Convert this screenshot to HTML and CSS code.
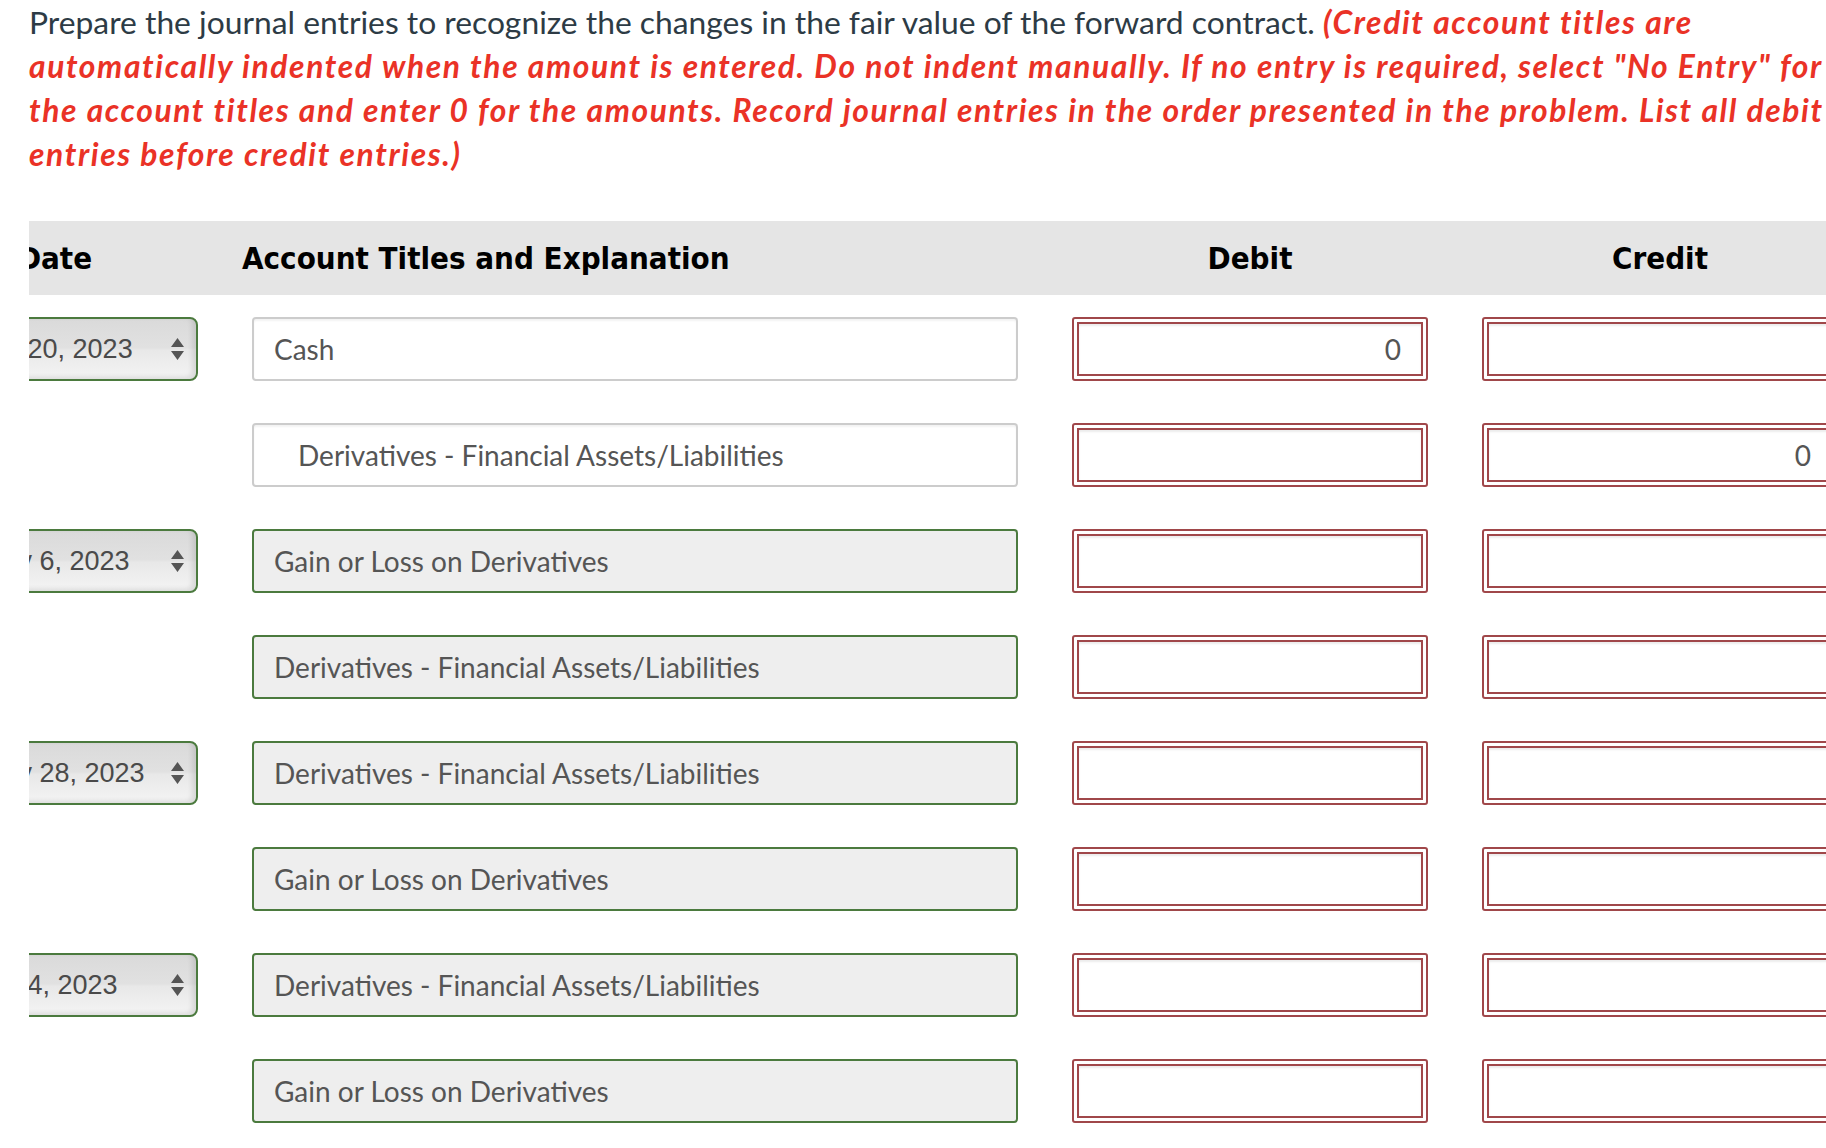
FILE: index.html
```html
<!DOCTYPE html>
<html lang="en">
<head>
<meta charset="utf-8">
<title>Journal entries</title>
<link rel="stylesheet" href="styles.css">
</head>
<body>
<p class="prompt">Prepare the journal entries to recognize the changes in the fair value of the forward contract. <em>(Credit account titles are automatically indented when the amount is entered. Do not indent manually. If no entry is required, select "No Entry" for the account titles and enter 0 for the amounts. Record journal entries in the order presented in the problem. List all debit entries before credit entries.)</em></p>

<div class="journal-wrap">
  <div class="journal">
    <div class="jhead cols">
      <div class="th th-center">Date</div>
      <div class="th">Account Titles and Explanation</div>
      <div class="th th-center">Debit</div>
      <div class="th th-center">Credit</div>
    </div>

    <div class="jbody">
      <div class="jrow cols">
        <div class="cell"><div class="date-select"><span class="date-text">January 20, 2023</span><svg class="spin" viewBox="0 0 13 26" width="13" height="26"><path d="M6.5 2 L13 11 L0 11 Z M0 15 L13 15 L6.5 24 Z" fill="#555"/></svg></div></div>
        <div class="cell"><div class="acct acct-plain">Cash</div></div>
        <div class="cell"><div class="amt"><div class="amt-in">0</div></div></div>
        <div class="cell"><div class="amt"><div class="amt-in"></div></div></div>
      </div>

      <div class="jrow cols">
        <div class="cell"></div>
        <div class="cell"><div class="acct acct-plain acct-indent">Derivatives - Financial Assets/Liabilities</div></div>
        <div class="cell"><div class="amt"><div class="amt-in"></div></div></div>
        <div class="cell"><div class="amt"><div class="amt-in">0</div></div></div>
      </div>

      <div class="jrow cols">
        <div class="cell"><div class="date-select"><span class="date-text">February 6, 2023</span><svg class="spin" viewBox="0 0 13 26" width="13" height="26"><path d="M6.5 2 L13 11 L0 11 Z M0 15 L13 15 L6.5 24 Z" fill="#555"/></svg></div></div>
        <div class="cell"><div class="acct acct-ok">Gain or Loss on Derivatives</div></div>
        <div class="cell"><div class="amt"><div class="amt-in"></div></div></div>
        <div class="cell"><div class="amt"><div class="amt-in"></div></div></div>
      </div>

      <div class="jrow cols">
        <div class="cell"></div>
        <div class="cell"><div class="acct acct-ok">Derivatives - Financial Assets/Liabilities</div></div>
        <div class="cell"><div class="amt"><div class="amt-in"></div></div></div>
        <div class="cell"><div class="amt"><div class="amt-in"></div></div></div>
      </div>

      <div class="jrow cols">
        <div class="cell"><div class="date-select"><span class="date-text">February 28, 2023</span><svg class="spin" viewBox="0 0 13 26" width="13" height="26"><path d="M6.5 2 L13 11 L0 11 Z M0 15 L13 15 L6.5 24 Z" fill="#555"/></svg></div></div>
        <div class="cell"><div class="acct acct-ok">Derivatives - Financial Assets/Liabilities</div></div>
        <div class="cell"><div class="amt"><div class="amt-in"></div></div></div>
        <div class="cell"><div class="amt"><div class="amt-in"></div></div></div>
      </div>

      <div class="jrow cols">
        <div class="cell"></div>
        <div class="cell"><div class="acct acct-ok">Gain or Loss on Derivatives</div></div>
        <div class="cell"><div class="amt"><div class="amt-in"></div></div></div>
        <div class="cell"><div class="amt"><div class="amt-in"></div></div></div>
      </div>

      <div class="jrow cols">
        <div class="cell"><div class="date-select"><span class="date-text">January 4, 2023</span><svg class="spin" viewBox="0 0 13 26" width="13" height="26"><path d="M6.5 2 L13 11 L0 11 Z M0 15 L13 15 L6.5 24 Z" fill="#555"/></svg></div></div>
        <div class="cell"><div class="acct acct-ok">Derivatives - Financial Assets/Liabilities</div></div>
        <div class="cell"><div class="amt"><div class="amt-in"></div></div></div>
        <div class="cell"><div class="amt"><div class="amt-in"></div></div></div>
      </div>

      <div class="jrow cols">
        <div class="cell"></div>
        <div class="cell"><div class="acct acct-ok">Gain or Loss on Derivatives</div></div>
        <div class="cell"><div class="amt"><div class="amt-in"></div></div></div>
        <div class="cell"><div class="amt"><div class="amt-in"></div></div></div>
      </div>
    </div>
  </div>
</div>
</body>
</html>
```

FILE: styles.css
```css
html, body {
  margin: 0;
  padding: 0;
  background: #ffffff;
  overflow: hidden;
}

body {
  font-family: Lato, "Open Sans", sans-serif;
  width: 1826px;
  height: 1148px;
}

.prompt {
  margin: 0 0 0 29px;
  width: 1830px;
  font-size: 31.8px;
  line-height: 44px;
  color: #2d3b45;
}

.prompt em {
  color: #ea3226;
  font-weight: bold;
  font-style: italic;
  letter-spacing: 1.6px;
}

.journal-wrap {
  margin: 45px 0 0 29px;
  width: 1797px;
  overflow: hidden;
}

.journal {
  margin-left: -127px;
  width: 1946px;
}

.cols {
  display: grid;
  grid-template-columns: 306px 786px 376px 376px;
  column-gap: 34px;
}

.jhead {
  height: 74px;
  background: #e5e5e5;
  align-items: center;
}

.th {
  font-family: "DejaVu Sans Condensed", "DejaVu Sans", Verdana, sans-serif;
  font-weight: bold;
  font-size: 31px;
  color: #000;
  white-space: nowrap;
}

.th-center {
  text-align: center;
}

.jbody {
  padding-top: 22px;
  display: flex;
  flex-direction: column;
  row-gap: 42px;
}

.jrow {
  height: 64px;
}

.cell {
  padding: 0 10px;
}

.date-select {
  box-sizing: border-box;
  height: 64px;
  border: 2px solid #4b7a3e;
  border-radius: 8px;
  background: linear-gradient(to bottom, #dadada 0%, #e1e1e1 48%, #e8e8e8 52%, #f4f4f4 100%);
  box-shadow: inset -4px -2px 5px rgba(0, 0, 0, 0.10);
  display: flex;
  align-items: center;
  justify-content: space-between;
  padding: 0 12px 0 10px;
  overflow: hidden;
}

.date-text {
  font-family: "Liberation Sans", Arial, sans-serif;
  font-size: 27px;
  color: #4a4a4a;
  white-space: nowrap;
}

.spin {
  flex: none;
  display: block;
}

.acct {
  box-sizing: border-box;
  height: 64px;
  border-radius: 4px;
  display: flex;
  align-items: center;
  padding-left: 20px;
  font-size: 28px;
  color: #555555;
  white-space: nowrap;
}

.acct-plain {
  border: 2px solid #cccccc;
  background: #ffffff;
  box-shadow: inset 0 2px 2px rgba(0, 0, 0, 0.05);
}

.acct-indent {
  padding-left: 44px;
}

.acct-ok {
  border: 2px solid #4b7a3e;
  background: #eeeeee;
}

.amt {
  box-sizing: border-box;
  height: 64px;
  border: 2px solid #a0474a;
  border-radius: 3px;
  padding: 3px;
  background: #ffffff;
}

.amt-in {
  box-sizing: border-box;
  height: 100%;
  border: 2px solid #a0474a;
  box-shadow: inset 0 2px 2px rgba(0, 0, 0, 0.08);
  display: flex;
  align-items: center;
  justify-content: flex-end;
  padding-right: 20px;
  font-size: 28px;
  color: #555555;
}
```
